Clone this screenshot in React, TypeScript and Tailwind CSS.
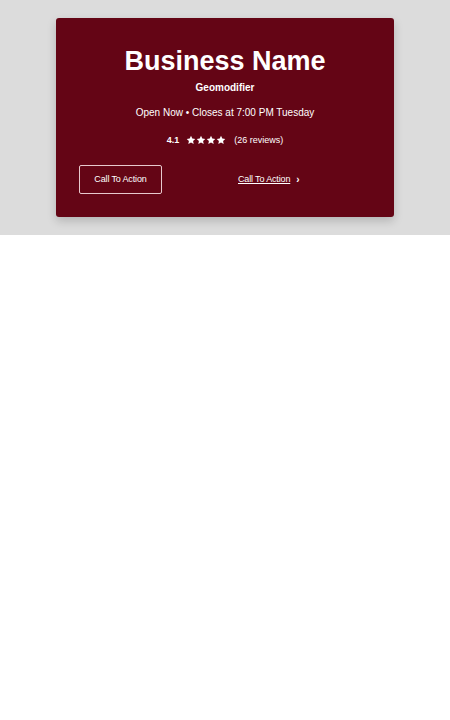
import React from "react";

function Star() {
  return (
    <svg width="10" height="10" viewBox="0 0 24 24" fill="white" aria-hidden="true">
      <path d="M12 1.8l3.1 6.6 7.2.9-5.3 5 1.4 7.1L12 17.9l-6.4 3.5 1.4-7.1-5.3-5 7.2-.9z" />
    </svg>
  );
}

export default function App() {
  return (
    <div className="w-full bg-white min-h-[720px]" style={{ fontFamily: '"Liberation Sans", Arial, sans-serif' }}>
      <div className="bg-[#dcdcdc] py-[18px] flex justify-center">
        <div className="w-[338px] bg-[#640515] rounded-[3px] shadow-[0_4px_10px_rgba(0,0,0,0.18)] pt-[28px] pb-[23px] px-[23px] text-white flex flex-col items-center">
          <h1 className="text-[27px] leading-[31px] font-bold">Business Name</h1>
          <div className="mt-[5px] text-[10px] leading-[12px] font-bold">Geomodifier</div>
          <div className="mt-[13px] text-[10px] leading-[12px]">Open Now • Closes at 7:00 PM Tuesday</div>
          <div className="mt-[15px] flex items-center text-[9px] leading-[12px]">
            <span className="font-bold">4.1</span>
            <span className="ml-[7px] flex items-center">
              <Star />
              <Star />
              <Star />
              <Star />
            </span>
            <span className="ml-[8px]">(26 reviews)</span>
          </div>
          <div className="mt-[19px] w-full flex items-center">
            <div className="w-[83px] h-[29px] border border-[#e8c9cd] rounded-[2px] flex items-center justify-center text-[9px] tracking-[-0.15px]">
              Call To Action
            </div>
            <div className="ml-[76px] flex items-center text-[9px] tracking-[-0.15px]">
              <span className="underline">Call To Action</span>
              <span className="ml-[6px] text-[10px] font-bold">›</span>
            </div>
          </div>
        </div>
      </div>
    </div>
  );
}
